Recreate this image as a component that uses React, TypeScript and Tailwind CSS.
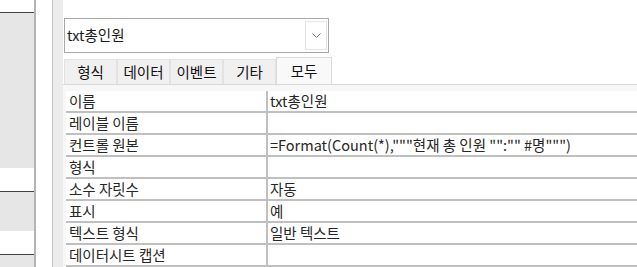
const rows: [string, string][] = [
  ['이름', 'txt총인원'],
  ['레이블 이름', ''],
  ['컨트롤 원본', '=Format(Count(*),"""현재 총 인원 "":"" #명""")'],
  ['형식', ''],
  ['소수 자릿수', '자동'],
  ['표시', '예'],
  ['텍스트 형식', '일반 텍스트'],
  ['데이터시트 캡션', ''],
  ['', ''],
];

const tabs = ['형식', '데이터', '이벤트', '기타'];

export default function App() {
  return (
    <div
      className="flex w-[637px] h-[267px] overflow-hidden bg-white text-[14.5px] text-[#262626]"
      style={{ fontFamily: '"Noto Sans CJK KR", "Noto Sans", sans-serif' }}
    >
      {/* left navigation strip */}
      <div className="w-[34px] shrink-0 flex flex-col bg-[#e6e6e6]">
        <div className="h-[13px] bg-white border-b border-[#404040]" />
        <div className="h-[155px]" />
        <div className="h-[24px] bg-white border-b border-[#404040]" />
        <div className="h-[39px]" />
        <div className="h-[24px] bg-white border-b border-[#404040]" />
        <div className="flex-1" />
      </div>
      <div className="w-[2px] shrink-0 bg-[#b4b4b4]" />
      <div className="w-[17px] shrink-0 bg-white border-r border-[#c8c8c8]" />
      <div className="w-[10px] shrink-0 bg-[#ececec]" />

      {/* property sheet */}
      <div className="flex-1 flex flex-col min-w-0">
        <div className="pl-[1px] pt-[18px]">
          <div className="w-[265px] h-[35px] border border-[#a8a8a8] flex items-center justify-between pl-[2px] pr-[1px] bg-white">
            <span className="leading-none text-[#1a1a1a]">txt총인원</span>
            <div className="w-[22px] h-[29px] border border-[#e4e4e4] flex items-center justify-center bg-white">
              <svg width="9" height="5" viewBox="0 0 9 5" fill="none">
                <path d="M0.5 0.5 L4.5 4.5 L8.5 0.5" stroke="#707070" strokeWidth="1" />
              </svg>
            </div>
          </div>
        </div>

        <div className="flex items-end pl-[1px] mt-[4px] h-[27px]">
          {tabs.map((t) => (
            <div
              key={t}
              className="w-[53px] h-[25px] flex items-center justify-center bg-[#f0f0f0] border border-b-0 border-[#e2e2e2] text-[#111] leading-none"
            >
              {t}
            </div>
          ))}
          <div className="w-[56px] h-[27px] flex items-center justify-center bg-[#f9f9f9] border border-b-0 border-[#d9d9d9] text-[#111] leading-none">
            모두
          </div>
        </div>

        <div className="flex-1 border-t border-[#d9d9d9] bg-[#f7f7f7] pl-[3px] pt-[6px]">
          <div className="bg-white">
            {rows.map(([k, v], i) => (
              <div key={i} className="flex h-[22px] border-b-2 border-[#c0c0c0]">
                <div className="w-[200px] shrink-0 pl-[3px] leading-[20px] whitespace-nowrap">{k}</div>
                <div className="w-[2px] shrink-0 bg-[#c0c0c0]" />
                <div className="flex-1 pl-[2px] leading-[20px] whitespace-nowrap">{v}</div>
              </div>
            ))}
          </div>
        </div>
      </div>
    </div>
  );
}
